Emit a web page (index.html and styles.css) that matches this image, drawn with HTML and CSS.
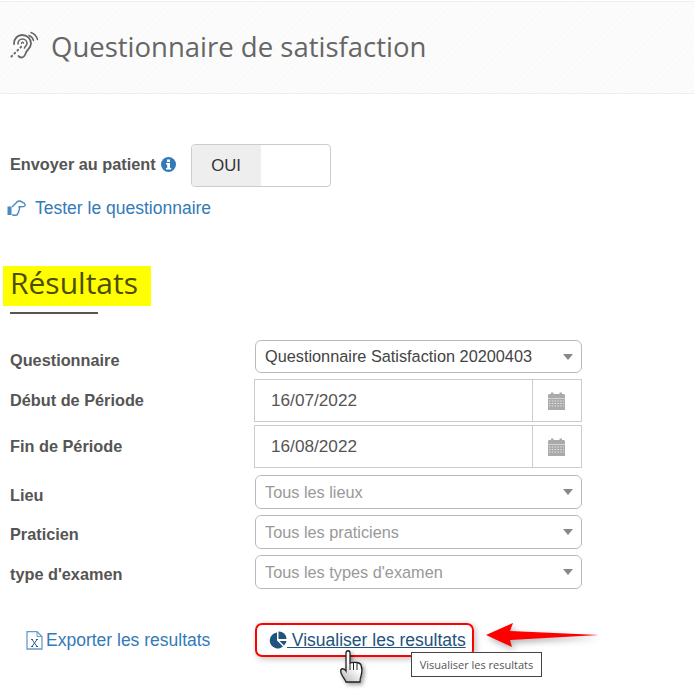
FILE: index.html
```html
<!DOCTYPE html>
<html lang="fr">
<head>
<meta charset="utf-8">
<title>Questionnaire de satisfaction</title>
<link rel="stylesheet" href="styles.css">
</head>
<body>
<header class="page-header">
  <svg class="ear-icon" width="30" height="30" viewBox="0 0 30 30" fill="none" stroke="#666" stroke-linecap="round">
    <path d="M5 13C5 7 9 4 13 4c5 0 9 3.500 9 8.500 0 4-3 5.500-4.500 8-1 2-1.500 6-5 6-1.500 0-2.500-.6-3-1.500" stroke-width="1.800"/>
    <path d="M9 13c0-3 2-5 4.500-5S18 10 18 12.500c0 2-2 3-2.500 4.500" stroke-width="1.600"/>
    <path d="M12.500 12.500c0-1.500 2-1.800 2-.3" stroke-width="1.300"/>
    <path d="M20 4.500c2.500 1 4 2.500 4.500 5M22 1.500c3 1 5.500 3.500 6.500 7" stroke-width="1.500"/>
    <path d="M2.500 25.500l.6-.6M5.500 22.500l.6-.6M8.500 19.500l.6-.6M11.500 16.500l.6-.6" stroke-width="2"/>
  </svg>
  <h1 class="page-title">Questionnaire de satisfaction</h1>
</header>

<main class="content">
  <div class="send-row">
    <span class="strong-label">Envoyer au patient</span>
    <svg class="info-icon" width="15" height="15" viewBox="0 0 15 15"><circle cx="7.500" cy="7.500" r="7.500" fill="#337ab7"/><rect x="6" y="2.500" width="3" height="2.500" fill="#fff"/><path d="M5 6h4v5h1.200v1.500H5V11h1.200V7.500H5z" fill="#fff"/></svg>
    <div class="toggle"><span class="toggle-on">OUI</span></div>
  </div>
  <a class="test-link" href="#">
    <svg width="19" height="16" viewBox="0 0 19 16" fill="none" stroke="#4a8ac4" stroke-linejoin="round"><rect x="0.500" y="6.500" width="4" height="8.500" fill="#4a8ac4" stroke="none"/><path d="M5 7 9 3C10 1.500 11.500 .7 13 1L16.800 2.800C18.300 3.700 18.500 5.500 17.500 6.200 16.500 7 13.500 6.800 12 6.800 12.800 8.500 12.300 10 11.800 10.500 12 12 11.200 13 10.700 13.500 10.700 15 9.500 15.300 8.500 15.300H6.500L5 14.500" stroke-width="1.400"/></svg>
    <span>Tester le questionnaire</span>
  </a>

  <h2 class="section-title"><span class="highlight">Résultats</span></h2>
  <div class="section-rule"></div>

  <form class="form-grid">
    <div class="form-row row-q">
      <span class="strong-label">Questionnaire</span>
      <div class="select value">Questionnaire Satisfaction 20200403<i class="caret"></i></div>
    </div>
    <div class="form-row row-d1">
      <span class="strong-label label-date">Début de Période</span>
      <div class="date"><span class="date-value">16/07/2022</span><span class="date-btn"><svg class="cal" width="17" height="18" viewBox="0 0 17 18"><path d="M0 3.500C0 2.500 .7 2 1.500 2H15.500C16.300 2 17 2.500 17 3.500V6H0z" fill="#aaa"/><rect x="3" y="0.500" width="2.500" height="3" fill="#aaa"/><rect x="11.500" y="0.500" width="2.500" height="3" fill="#aaa"/><rect y="6.500" width="17" height="11.500" fill="#aaa"/><path d="M1 9h15M1 11.500h15M1 14h15" stroke="#e4e4e4" stroke-dasharray="1.500 1.300"/></svg></span></div>
    </div>
    <div class="form-row row-d2">
      <span class="strong-label label-date">Fin de Période</span>
      <div class="date"><span class="date-value">16/08/2022</span><span class="date-btn"><svg class="cal" width="17" height="18" viewBox="0 0 17 18"><path d="M0 3.500C0 2.500 .7 2 1.500 2H15.500C16.300 2 17 2.500 17 3.500V6H0z" fill="#aaa"/><rect x="3" y="0.500" width="2.500" height="3" fill="#aaa"/><rect x="11.500" y="0.500" width="2.500" height="3" fill="#aaa"/><rect y="6.500" width="17" height="11.500" fill="#aaa"/><path d="M1 9h15M1 11.500h15M1 14h15" stroke="#e4e4e4" stroke-dasharray="1.500 1.300"/></svg></span></div>
    </div>
    <div class="form-row row-s row-lieu">
      <span class="strong-label">Lieu</span>
      <div class="select placeholder">Tous les lieux<i class="caret"></i></div>
    </div>
    <div class="form-row row-s">
      <span class="strong-label">Praticien</span>
      <div class="select placeholder">Tous les praticiens<i class="caret"></i></div>
    </div>
    <div class="form-row row-s">
      <span class="strong-label">type d'examen</span>
      <div class="select placeholder">Tous les types d'examen<i class="caret"></i></div>
    </div>
  </form>

  <div class="actions">
    <a class="export-link" href="#">
      <svg width="17" height="19" viewBox="0 0 17 19" fill="none"><path d="M1 .7H11L16 5.500V18H1z" stroke="#6a9bcb" stroke-width="1.300"/><path d="M11 .7V5.500H16" stroke="#6a9bcb"/><path d="M5 8.500h2M10 8.500h2M5 15.500h2M10 15.500h2M6 8.500l5 7M11 8.500l-5 7" stroke="#2f5f8f" stroke-width="1"/></svg>
      <span>Exporter les resultats</span>
    </a>
    <a class="view-link" href="#">
      <svg width="18" height="18" viewBox="0 0 18 18"><path d="M8 1.500V9.500L14 15.500A8 8 0 1 1 8 1.500z" fill="#23527c"/><path d="M9.500 .5A7.500 7.500 0 0 1 17.500 8H9.500z" fill="#23527c"/><path d="M10.500 10h7a7.500 7.500 0 0 1-2.500 4.500z" fill="#23527c"/></svg><span> Visualiser les resultats</span>
    </a>
  </div>
</main>

<div class="callout"></div>
<svg class="arrow" width="114" height="34" viewBox="0 0 114 34"><path d="M0 13L27 1 24 9 113 13 24 18 26 25z" fill="#f00"/></svg>
<svg class="cursor" width="26" height="36" viewBox="0 0 26 36">
  <defs><linearGradient id="hand" x1="0.800" y1="0" x2="0.200" y2="1"><stop offset="0.450" stop-color="#fff"/><stop offset="1" stop-color="#bbb"/></linearGradient></defs>
  <path d="M6 3C6 0 10 0 10 3V13C13 12 20 12 21 15 22 18 22 23 21 26 20 28 20 30 20 32H6C5 29 .7 25 .7 21 .7 18 4 18 6 21z" fill="url(#hand)" stroke="#222" stroke-width="1.300"/>
  <path d="M10 13v7M13.500 13v7M17 13.500v6.500" stroke="#222"/>
</svg>
<div class="tooltip">Visualiser les resultats</div>
</body>
</html>
```

FILE: styles.css
```css
* { box-sizing: border-box; }
html, body { margin: 0; padding: 0; }
body {
  width: 694px;
  height: 692px;
  overflow: hidden;
  background: #fff;
  font-family: "Liberation Sans", Arial, sans-serif;
  font-size: 16px;
  color: #555;
  position: relative;
}
a { color: #337ab7; text-decoration: none; }

.page-header {
  margin-top: 1px;
  height: 93px;
  border-top: 1px solid #eee;
  border-bottom: 1px solid #eee;
  background: repeating-linear-gradient(135deg, #fafafa 0 2px, #fcfcfc 2px 4px);
  display: flex;
  align-items: center;
  padding: 0 0 0 9px;
  gap: 12px;
}
.ear-icon { flex: none; margin-top: -3px; }
.page-title {
  margin: 0;
  font-family: "Open Sans", sans-serif;
  font-weight: 400;
  font-size: 27.5px;
  color: #666;
  position: relative;
  top: -1px;
}

.content { padding: 50px 0 0 10px; }

.strong-label { font-weight: 700; font-size: 16.3px; color: #555; position: relative; top: 4px; }
.send-row .strong-label { top: -1px; }
.label-date { top: 0; }
.row-s .strong-label { top: 2px; }
.row-lieu .strong-label { top: 3px; }

.send-row { display: flex; align-items: center; height: 43px; }
.info-icon { margin-left: 5px; position: relative; top: -1px; }
.toggle {
  margin-left: 15px;
  width: 140px;
  height: 43px;
  border: 1px solid #ccc;
  border-radius: 4px;
  overflow: hidden;
}
.toggle-on {
  display: block;
  width: 69px;
  height: 100%;
  background: #eee;
  color: #333;
  font-size: 16.7px;
  line-height: 41px;
  text-align: center;
}

.test-link {
  margin: 10px 0 0 -3px;
  display: flex;
  align-items: center;
  gap: 9px;
  font-size: 17.5px;
  height: 22px;
}

.section-title {
  margin: 44px 0 0 -7px;
  font-family: "Open Sans", sans-serif;
  font-weight: 400;
  font-size: 30px;
  color: #4d4d00;
  line-height: 40px;
  height: 41px;
}
.highlight { display: inline-block; background: #ff0; padding: 0 13px 0 7px; height: 40px; line-height: 34px; }
.section-rule { margin-top: 8px; width: 88px; height: 2px; background: #555; }

.form-grid { margin-top: 26px; width: 572px; }
.form-row { display: flex; align-items: center; justify-content: space-between; }
.row-q { height: 33px; margin-bottom: 6px; }
.row-d1 { height: 43px; margin-bottom: 3px; }
.row-d2 { height: 43px; margin-bottom: 7px; }
.row-s { height: 34px; margin-bottom: 6px; }
.row-s:last-child { margin-bottom: 0; }

.select {
  width: 327px;
  height: 100%;
  border: 1px solid #bbb;
  border-radius: 6px;
  padding: 0 9px;
  display: flex;
  align-items: center;
  position: relative;
  font-size: 16.3px;
}
.value { color: #444; }
.placeholder { color: #999; }
.caret {
  position: absolute;
  right: 8px;
  top: 50%;
  margin-top: -3px;
  width: 0;
  height: 0;
  border-left: 5px solid transparent;
  border-right: 5px solid transparent;
  border-top: 6px solid #888;
}

.date {
  width: 328px;
  height: 100%;
  border: 1px solid #ccc;
  display: flex;
  align-items: center;
}
.date-value { flex: 1; padding-left: 16px; font-size: 17.2px; color: #555; }
.date-btn {
  width: 49px;
  height: 100%;
  border-left: 1px solid #ccc;
  display: flex;
  align-items: center;
  justify-content: center;
}
.cal { margin-right: 2px; }

.actions {
  margin: 34px 0 0 16px;
  display: flex;
  align-items: center;
  height: 34px;
}
.export-link { display: flex; align-items: center; gap: 3px; font-size: 17.5px; width: 243px; }
.view-link { display: flex; align-items: center; font-size: 17.5px; color: #23527c; text-decoration: underline; white-space: pre; }

.callout {
  position: absolute;
  left: 255px;
  top: 623px;
  width: 219px;
  height: 34px;
  border: 2px solid #f00;
  border-radius: 7px;
  box-shadow: 2px 2px 6px rgba(0,0,0,.25);
}
.arrow { position: absolute; left: 486px; top: 622px; filter: drop-shadow(2px 3px 3px rgba(0,0,0,.3)); }
.cursor { position: absolute; left: 340px; top: 650px; filter: drop-shadow(2px 2px 2px rgba(0,0,0,.4)); }
.tooltip {
  position: absolute;
  left: 411px;
  top: 652px;
  width: 131px;
  height: 25px;
  border: 1px solid #444;
  background: #fff;
  font-family: "Open Sans", sans-serif;
  font-size: 11px;
  line-height: 23px;
  text-align: center;
  color: #555;
}
```
